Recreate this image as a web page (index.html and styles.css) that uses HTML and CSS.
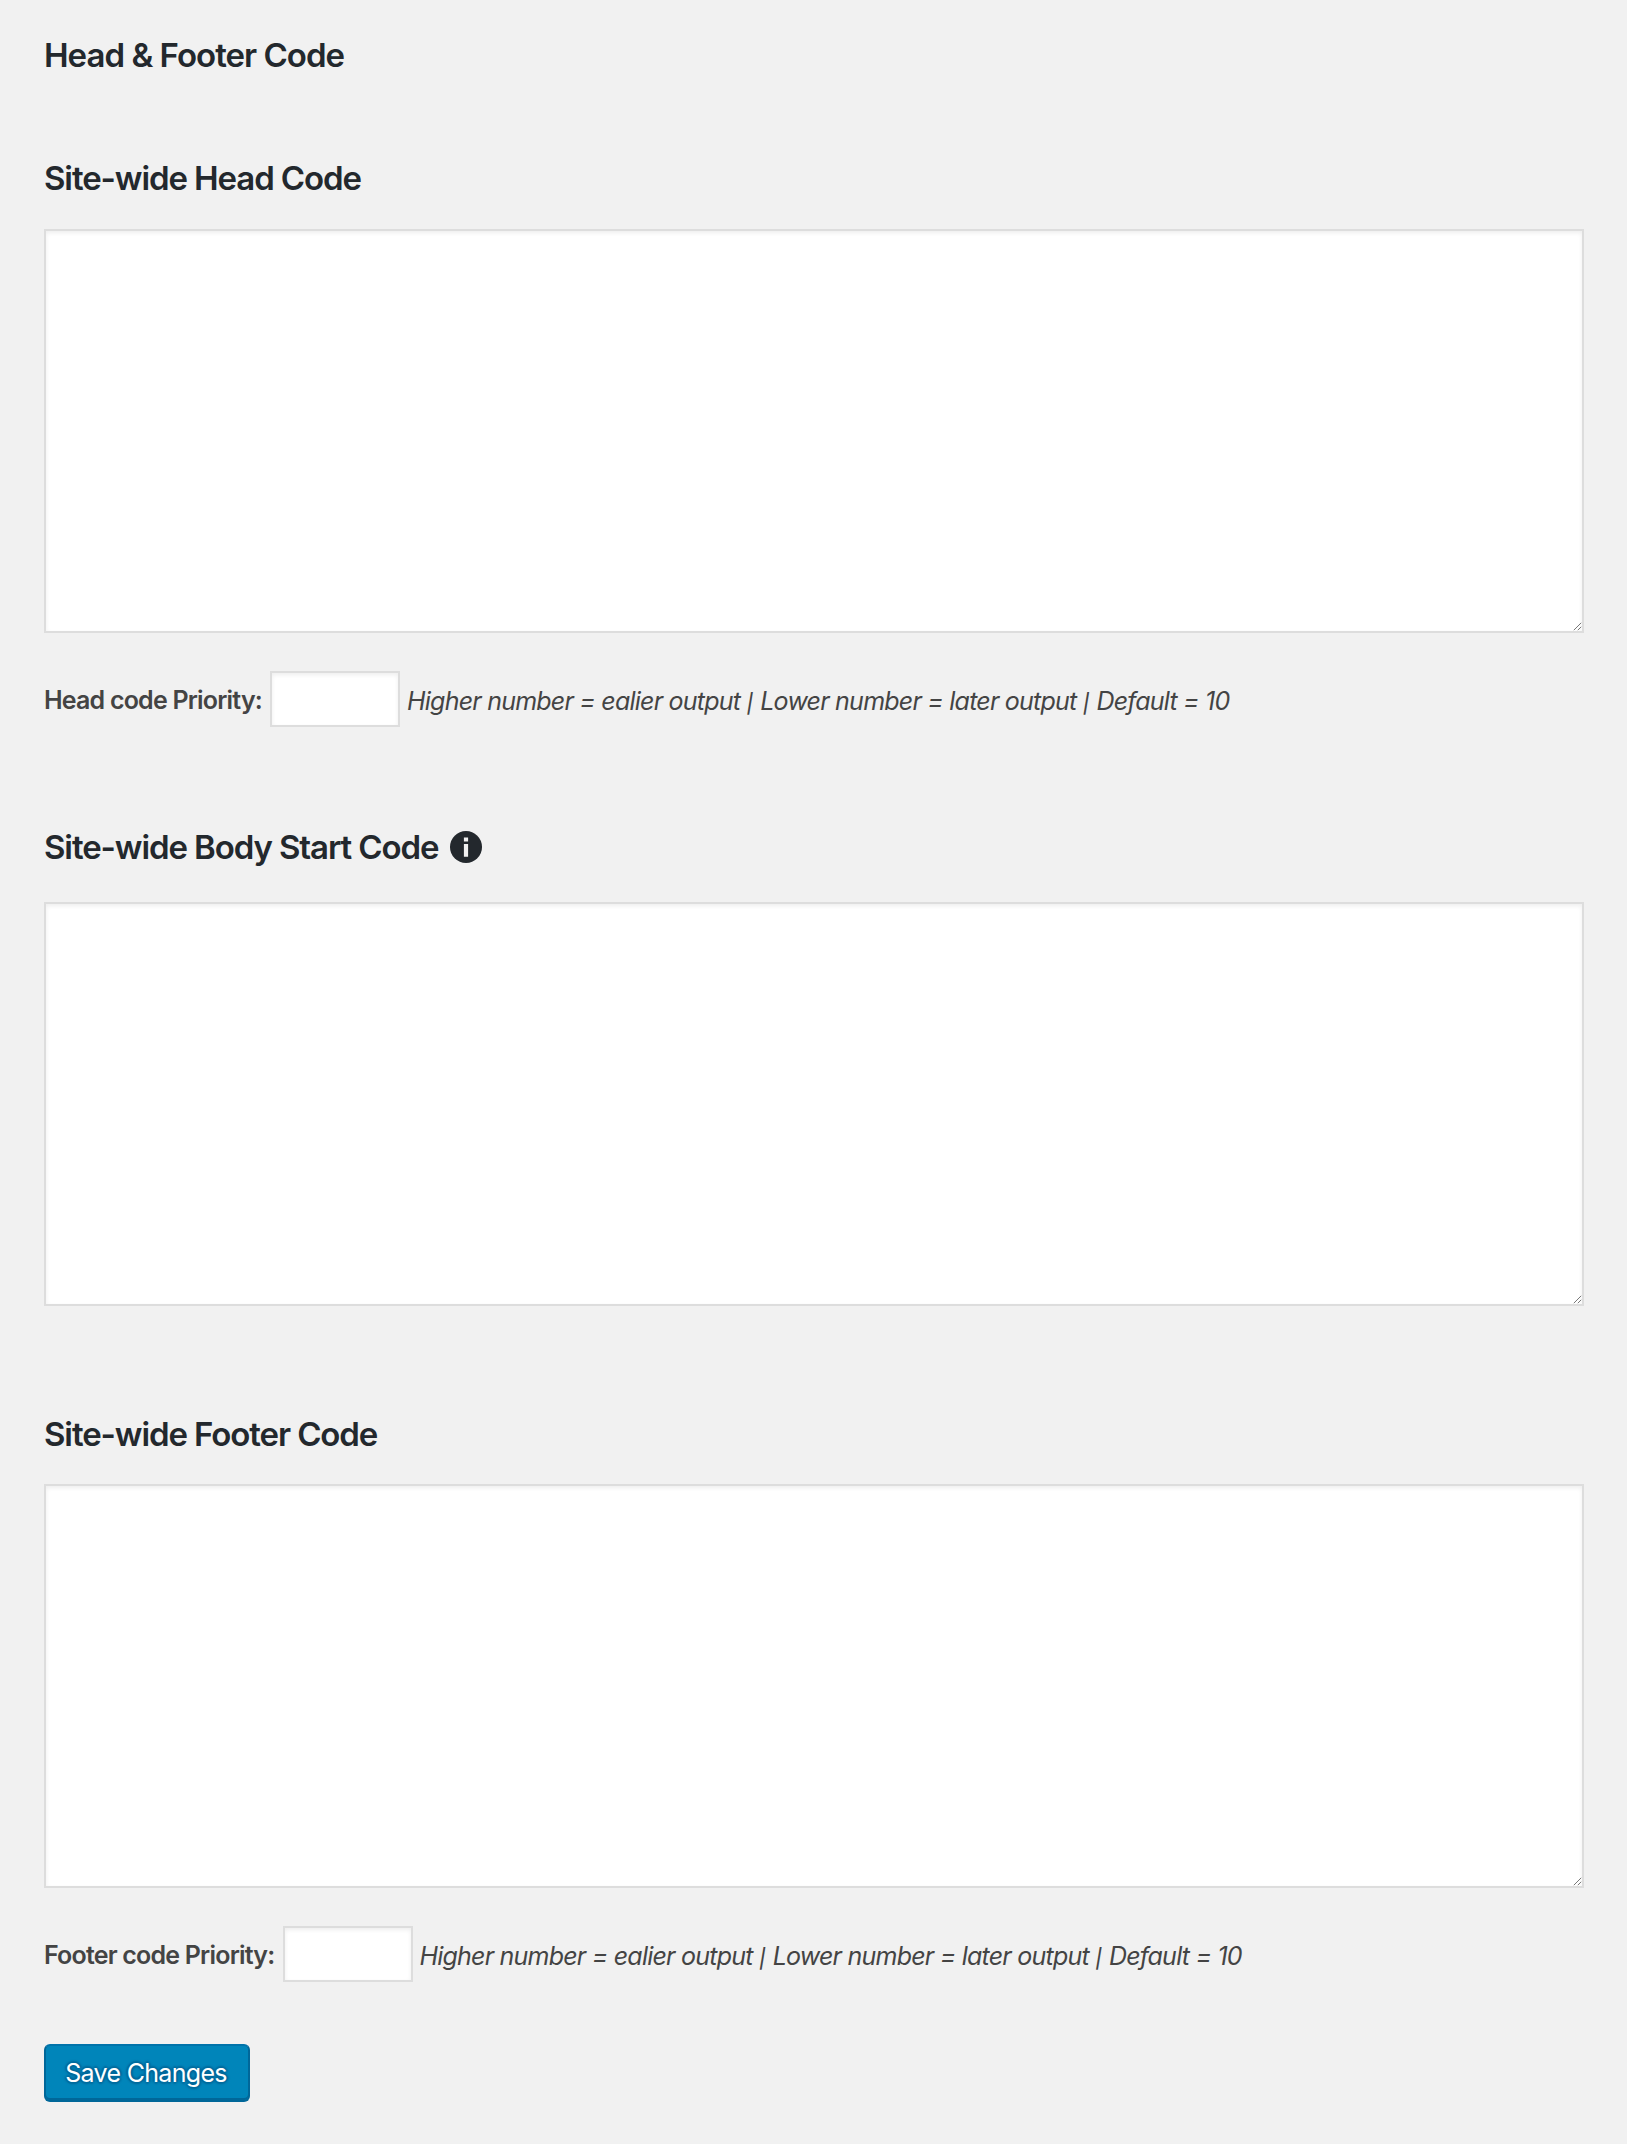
FILE: index.html
```html
<!DOCTYPE html>
<html lang="en">
<head>
<meta charset="utf-8">
<title>Head &amp; Footer Code</title>
<link rel="stylesheet" href="styles.css">
</head>
<body>
<form class="settings">
  <h1 class="heading page-title">Head &amp; Footer Code</h1>

  <section class="section">
    <h2 class="heading">Site-wide Head Code</h2>
    <div class="editor">
      <textarea class="code" aria-label="Site-wide Head Code"></textarea>
      <svg class="grip" viewBox="0 0 9 9"><path d="M.8 8.2 8.2 .8M4.8 8.2l3.4-3.4"/></svg>
    </div>
    <div class="priority">
      <label class="label" for="head-priority">Head code Priority:</label>
      <input class="number" id="head-priority" type="text">
      <em class="hint">Higher number = ealier output <span class="bar">|</span> Lower number = later output <span class="bar">|</span> Default = 10</em>
    </div>
  </section>

  <section class="section section-body">
    <h2 class="heading">Site-wide Body Start Code
      <svg class="info" viewBox="0 0 32 32"><circle cx="16" cy="16" r="16"/><path d="M13.9 6.4h4.200v4h-4.200zM13.900 13h4.200v12.800h-4.200z"/></svg>
    </h2>
    <div class="editor">
      <textarea class="code" aria-label="Site-wide Body Start Code"></textarea>
      <svg class="grip" viewBox="0 0 9 9"><path d="M.8 8.2 8.2 .8M4.8 8.2l3.4-3.4"/></svg>
    </div>
  </section>

  <section class="section section-footer">
    <h2 class="heading">Site-wide Footer Code</h2>
    <div class="editor">
      <textarea class="code" aria-label="Site-wide Footer Code"></textarea>
      <svg class="grip" viewBox="0 0 9 9"><path d="M.8 8.2 8.2 .8M4.8 8.2l3.4-3.4"/></svg>
    </div>
    <div class="priority">
      <label class="label" for="footer-priority">Footer code Priority:</label>
      <input class="number" id="footer-priority" type="text">
      <em class="hint">Higher number = ealier output <span class="bar">|</span> Lower number = later output <span class="bar">|</span> Default = 10</em>
    </div>
  </section>

  <button class="save" type="button">Save Changes</button>
</form>
</body>
</html>
```
FILE: styles.css
```css
* { box-sizing: border-box; }

body {
  margin: 0;
  background: #f1f1f1;
  color: #444;
  font-family: Inter, "Liberation Sans", sans-serif;
  font-size: 25px;
  letter-spacing: -.8px;
}

.settings {
  min-height: 2144px;
  padding: 35px 43px 0 44px;
}

.heading {
  display: flex;
  align-items: center;
  gap: 12px;
  height: 40px;
  margin: 0;
  color: #23282d;
  font-size: 33px;
  font-weight: 600;
  letter-spacing: -1.1px;
  line-height: 40px;
  white-space: nowrap;
}

.page-title {
  margin-bottom: 83px;
  letter-spacing: -.98px;
}

.editor {
  position: relative;
  height: 404px;
  margin-top: 31px;
}

.code,
.number {
  display: block;
  margin: 0;
  padding: 8px;
  border: 2px solid #ddd;
  border-radius: 0;
  outline: 0;
  background: #fff;
  box-shadow: inset 0 2px 4px rgba(0, 0, 0, .07);
  font: inherit;
}

.code {
  width: 100%;
  height: 100%;
  resize: none;
}

.grip {
  position: absolute;
  right: 2px;
  bottom: 2px;
  width: 9px;
  height: 9px;
  fill: none;
  stroke: #777;
}

.priority {
  display: flex;
  align-items: center;
  height: 56px;
  margin-top: 38px;
  line-height: 40px;
  white-space: nowrap;
}

.label {
  padding-top: 2px;
  font-weight: 600;
}

.number {
  width: 130px;
  height: 56px;
  margin: 0 7px 0 8px;
}
.section-footer .number { margin: 0 6px 0 9px; }

.hint {
  padding-top: 4px;
  letter-spacing: -.78px;
}

.bar {
  margin-right: 1.7px;
  font-size: 19px;
  font-weight: 500;
  line-height: 1;
}

.section-body { padding-top: 100px; }
.section-body .editor { margin-top: 35px; }
.section-footer { padding-top: 108px; }
.section-footer .editor { margin-top: 30px; }

.info {
  width: 32px;
  height: 32px;
  fill: #23282d;
}
.info path { fill: #f1f1f1; }

.save {
  display: block;
  width: 206px;
  height: 58px;
  margin: 62px 0 0;
  padding: 0 2px 0 0;
  border: 2px solid #006799;
  border-color: #0073aa #006799 #006799;
  border-radius: 6px;
  background: #0085ba;
  box-shadow: inset 0 -2px 0 #006799;
  color: #fff;
  font: inherit;
  letter-spacing: -.68px;
  text-shadow: 0 -2px 2px #006799, 2px 0 2px #006799, 0 2px 2px #006799, -2px 0 2px #006799;
}
```
